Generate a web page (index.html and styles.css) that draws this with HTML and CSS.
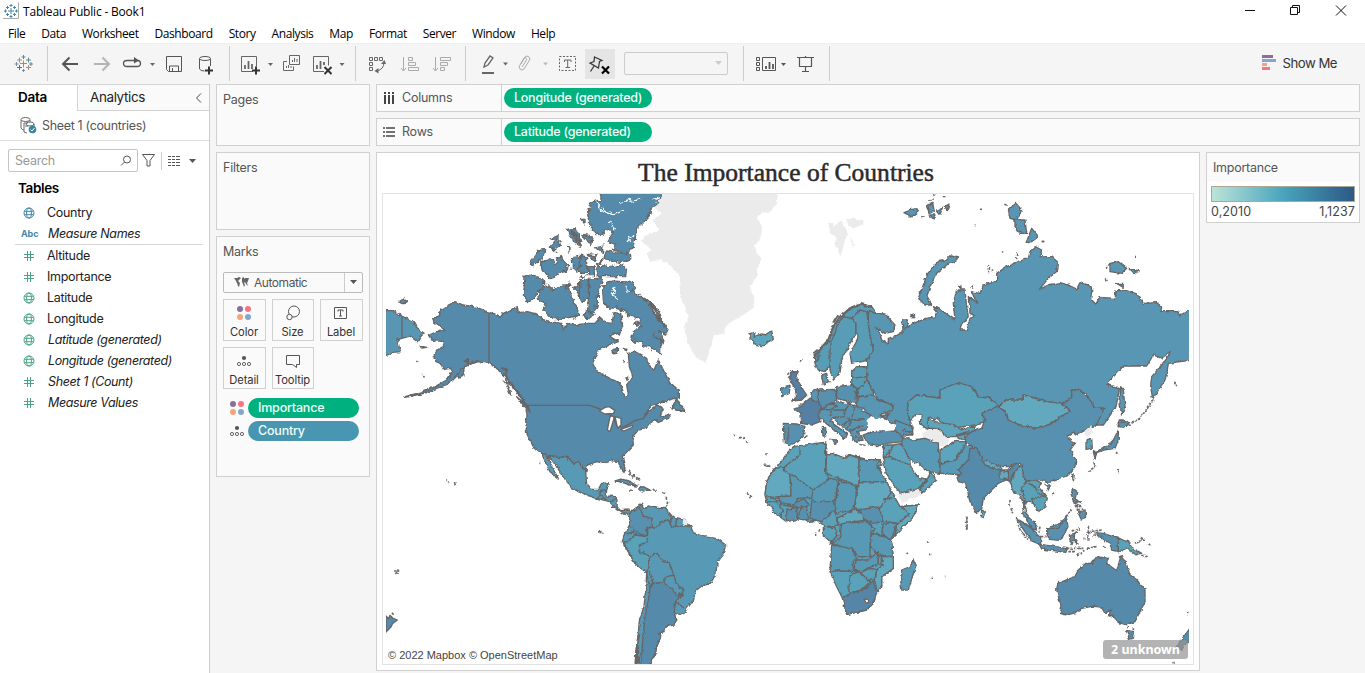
FILE: index.html
```html
<!DOCTYPE html>
<html lang="en">
<head>
<meta charset="utf-8">
<title>Tableau Public - Book1</title>
<link rel="stylesheet" href="styles.css">
</head>
<body>
<svg class="defs" width="0" height="0">
  <symbol id="globe" viewBox="0 0 12 12"><g fill="none" stroke="currentColor"><circle cx="6" cy="6" r="5"/><ellipse cx="6" cy="6" rx="2.4" ry="5"/><path d="M1.5 4.3h9M1.5 7.7h9"/></g></symbol>
  <symbol id="hash" viewBox="0 0 12 12"><path d="M4.5 1v10M7.5 1v10M1 4.5h10M1 7.5h10" stroke="currentColor" fill="none"/></symbol>
  <symbol id="dots" viewBox="0 0 16 16"><circle cx="4" cy="4" r="3" fill="#8a6f9d"/><circle cx="12" cy="4" r="3" fill="#fb7185"/><circle cx="4" cy="12" r="3" fill="#f3a47c"/><circle cx="12" cy="12" r="3" fill="#83a6cc"/></symbol>
  <symbol id="detail" viewBox="0 0 16 12"><circle cx="8" cy="3" r="2.1" fill="#555"/><g fill="none" stroke="#666"><circle cx="3" cy="9" r="1.6"/><circle cx="8" cy="9" r="1.6"/><circle cx="13" cy="9" r="1.6"/></g></symbol>
</svg>

<header class="titlebar">
  <svg class="app-icon" width="18" height="18" viewBox="0 0 18 18"><path d="M16.500.5v16H1" fill="none" stroke="#aaa"/><path d="M9 6v6M6 9h6M9 2v3M7.500 3.500h3M9 13v3M7.500 14.500h3M3.500 7.500v3M2 9h3M14.500 7.500v3M13 9h3M5.500 4v3M4 5.500h3M12.500 4v3M11 5.500h3M5.500 11v3M4 12.500h3M12.500 11v3M11 12.500h3" stroke="#4584a7" fill="none"/></svg>
  <span class="app-name">Tableau Public - Book1</span>
  <svg class="window-buttons" width="120" height="22" viewBox="1240 0 120 22" fill="none" stroke="#111"><path d="M1245 10.500h10M1290.500 7.500h7v7h-7zM1292.500 7v-1.500h7v7h-2M1336 5.500l10 10M1346 5.500l-10 10"/></svg>
</header>
<nav class="menu"><span>File</span><span>Data</span><span>Worksheet</span><span>Dashboard</span><span>Story</span><span>Analysis</span><span>Map</span><span>Format</span><span>Server</span><span>Window</span><span>Help</span></nav>

<div class="toolbar">
  <svg class="tool-group" width="47" height="35" viewBox="0 46 47 35" fill="none"><path d="M23.500 60.500v7M20 63.500h7" stroke="#e8762d"/><path d="M19.500 57.500v5M17 60h5M28.500 65v5M26 67.500h5" stroke="#b98b64"/><path d="M28.500 57.500v5M26 60h5M23.500 55v4M21.500 57h4M31 62v4M29 64h4" stroke="#5b879b"/><path d="M19.500 65v5M17 67.500h5" stroke="#c74055"/><path d="M16.500 62v4M14.500 64h4M23.500 69v3M22 70.500h3" stroke="#7b8eb2"/></svg>
  <svg class="tool-group" width="182" height="35" viewBox="47 46 182 35" fill="none" stroke="#555"><path d="M78 64H63M69.500 57.500L63 64l6.500 6.500" stroke-width="2"/><path d="M94 64h15M102.500 57.500l6.500 6.500-6.500 6.500" stroke="#b4b4b4" stroke-width="2"/><path d="M135 60.500h-8q-3.500 0-3.500 3t3.500 3h10q3.500 0 3.500-3t-3-3" stroke-width="1.300"/><path d="M134 57l5 3.500-5 3z" fill="#555" stroke="none"/><path d="M150 63h5l-2.500 3z" fill="#666" stroke="none"/><path d="M166.500 56.500h15v15h-13l-2-2zM169.500 71v-5h9v5M172.500 71v-3"/><ellipse cx="205" cy="58.500" rx="5.500" ry="2"/><path d="M199.500 59v10q1 2 5 2M210.500 59v7"/><path d="M205 70.500h8M209 66.500v8" stroke="#333" stroke-width="2"/></svg>
  <svg class="tool-group" width="126" height="35" viewBox="229 46 126 35" fill="none" stroke="#666"><path d="M253 71.500h-11.500v-15h15v10"/><path d="M245 69v-4M248.500 69v-8M252 69v-5" stroke-width="1.800"/><path d="M252 70.500h8M256 66.500v8" stroke="#333" stroke-width="2"/><path d="M268 63h5l-2.500 3zM339.500 63h5l-2.500 3z" fill="#666" stroke="none"/><path d="M289.500 55.500h10v9h-10zM287 61.500h-3.500v9h10v-4M292.500 62v-2M294.500 62v-4M297 62v-3M286.500 68v-2M288.500 68v-3M291 68v-2"/><path d="M324 71.500h-10.500v-15h15v9"/><path d="M317 69v-4M320.500 69v-8M324 65v-3" stroke-width="1.800"/><path d="M324.500 67l7 7M331.500 67l-7 7" stroke="#333" stroke-width="2"/></svg>
  <svg class="tool-group" width="110" height="35" viewBox="355 46 110 35" fill="none" stroke="#666"><path d="M369.500 57.500h3v3h-3zM374.500 57.500h3v3h-3zM379.500 57.500h3v3h-3zM369.500 62.500h3v3h-3zM369.500 67.500h3v3h-3zM376 71q8-1 8-9"/><path d="M374.500 71l4-3v5.500zM381 64l5 0-1.500-4z" fill="#666" stroke="none"/><g stroke="#aaa"><path d="M403.500 57v14M401 68l2.500 3 2.500-3M408.500 57.500h4v3h-4zM408.500 62.500h7v3h-7zM408.500 67.500h10v3h-10zM435.500 57v14M433 68l2.500 3 2.500-3M440.500 57.500h10v3h-10zM440.500 62.500h7v3h-7zM440.500 67.500h4v3h-4z"/></g></svg>
  <svg class="tool-group last" width="119" height="35" viewBox="465 46 119 35" fill="none" stroke="#666"><path d="M484 67l1-4 5-7 3 2-5 7zM484 67l4-2" stroke-width="1.300"/><path d="M482 73h12" stroke-width="2"/><path d="M503 62.500h5l-2.500 3z" fill="#666" stroke="none"/><path d="M543 62.500h5l-2.500 3z" fill="#bbb" stroke="none"/><path d="M521 64l4-7q2-2 4 0t0 4l-5 8q-2 2-4 0t0-4l4-7q1-1 2 0t0 3l-4 6" stroke="#aaa"/><path d="M559.500 56.500h16v14h-16z" stroke-dasharray="2 1.500"/><path d="M564.500 62v-2h6.500v2M567.700 60v8M565.500 67.500h4.500"/></svg>
  <span class="pin-button"><svg width="30" height="30" viewBox="585 49 30 30" fill="none" stroke="#333"><path d="M594.500 57l7.500 3.500-2.500 1-1 6.500-8.500-5 4-1.500zM594 66l-3.500 5.500" stroke-width="1.200"/><path d="M602 66.500l7 7M609 66.500l-7 7" stroke="#000" stroke-width="2.200"/></svg></span>
  <span class="combo"><svg width="8" height="5" viewBox="0 0 8 5"><path d="M0 0h7L3.500 4z" fill="#ccc"/></svg></span>
  <svg class="tool-group view-group" width="86" height="35" viewBox="743 46 86 35" fill="none" stroke="#555"><path d="M743.500 46v35" stroke="#ccc"/><path d="M756.500 57.500h3v3h-3zM756.500 62.500h3v3h-3zM756.500 67.500h3v3h-3zM762.500 57.500h13v13h-13z"/><path d="M766 69v-3M769.500 69v-7M773 69v-5" stroke-width="1.800"/><path d="M781 63h5l-2.500 3z" fill="#555" stroke="none"/><path d="M797 57.500h17M799.500 58v8.500h12V58M805.500 56v2M805.500 67v5M802 71.500h7" stroke-width="1.200"/></svg>
  <span class="show-me"><svg width="15" height="16" viewBox="0 0 15 16"><path fill="#8a6f9d" d="M0 0h11v3H0z"/><path fill="#83a6cc" d="M0 4h14v3H0z"/><path fill="#f3a47c" d="M0 8h5v3H0z"/><path fill="#fb7185" d="M0 12h8v3H0z"/></svg>Show Me</span>
</div>

<main class="workspace">
  <aside class="data-pane">
    <div class="tabs"><span class="tab-active">Data</span><span class="tab">Analytics<svg width="8" height="10" viewBox="0 0 8 10"><path d="M6 .5L1.500 5 6 9.500" fill="none" stroke="#444"/></svg></span></div>
    <div class="source"><svg width="18" height="18" viewBox="0 0 18 18" fill="none" stroke="#666"><ellipse cx="5.500" cy="2.500" rx="4.500" ry="2"/><path d="M1 3v8q1 2 3 2M4 6h4M5 9h3M4 6v9l3 1M10 5q-4 0-4 2t4 2 4-2-4-2v-2M14 7v3"/><circle cx="12.500" cy="12.500" r="3.800" fill="#3686a0" stroke="none"/><path d="M10.500 12.500l1.500 1.500 2.500-3" stroke="#fff"/></svg><span>Sheet 1 (countries)</span></div>
    <div class="search-row"><span class="search"><span>Search</span><svg width="12" height="12" viewBox="0 0 12 12" fill="none" stroke="#555"><circle cx="7" cy="4.500" r="3.500"/><path d="M4.500 7L1 10.500"/></svg></span>
      <svg width="58" height="18" viewBox="140 151 58 18" fill="none" stroke="#555"><path d="M142.500 153.500h12l-4.500 6v5.500h-3v-5.500z"/><path d="M161.500 151v18" stroke="#ccc"/><path d="M168 155.500h3m1 0h3m1 0h4M168 158.500h3m1 0h3m1 0h4M168 161.500h3m1 0h3m1 0h4M168 164.500h3m1 0h3m1 0h4"/><path d="M189 158h7l-3.500 4z" fill="#555" stroke="none"/></svg></div>
    <h2 class="tables">Tables</h2>
    <ul class="fields dims">
      <li class="blue"><svg><use href="#globe"/></svg><span>Country</span></li>
      <li class="blue"><b>Abc</b><i>Measure Names</i></li>
    </ul>
    <ul class="fields">
      <li><svg><use href="#hash"/></svg><span>Altitude</span></li>
      <li><svg><use href="#hash"/></svg><span>Importance</span></li>
      <li><svg><use href="#globe"/></svg><span>Latitude</span></li>
      <li><svg><use href="#globe"/></svg><span>Longitude</span></li>
      <li><svg><use href="#globe"/></svg><i>Latitude (generated)</i></li>
      <li><svg><use href="#globe"/></svg><i>Longitude (generated)</i></li>
      <li><svg><use href="#hash"/></svg><i>Sheet 1 (Count)</i></li>
      <li><svg><use href="#hash"/></svg><i>Measure Values</i></li>
    </ul>
  </aside>

  <section class="cards">
    <div class="card pages">Pages</div>
    <div class="card filters">Filters</div>
    <div class="card marks">Marks
      <div class="mark-type"><svg width="15" height="11" viewBox="0 0 15 11"><path d="M0 1l3 0 2-1 2 1-2 2-1 1 2 2-1 4-1-1-1-3-1-2zM8 1l2-1v2l1-1 4 0-1 3-1 2 1 3-2-2-1-2-1 1 1 2-1 2-1-3-1-2z" fill="#666"/></svg><span>Automatic</span><em><svg width="7" height="5" viewBox="0 0 7 5"><path d="M0 0h7L3.500 4z" fill="#555"/></svg></em></div>
      <div class="mark-buttons">
        <span><svg width="16" height="16"><use href="#dots"/></svg>Color</span>
        <span><svg width="16" height="16" viewBox="0 0 16 16" fill="none" stroke="#555"><circle cx="9" cy="6.500" r="5.500"/><circle cx="4.500" cy="12" r="2.700" fill="#fafafa"/></svg>Size</span>
        <span><svg width="16" height="16" viewBox="0 0 16 16" fill="none" stroke="#555"><path d="M1.500 2.500h12v11h-12zM5 6.500v-1.500h5v1.500M7.500 5v6M6 11h3"/></svg>Label</span>
        <span><svg width="16" height="16" viewBox="0 -2 16 16"><use href="#detail" width="16" height="12"/></svg>Detail</span>
        <span><svg width="16" height="16" viewBox="0 0 16 16" fill="none" stroke="#555"><path d="M1.500 2.500h13v9h-3v3l-4-3h-6z"/></svg>Tooltip</span>
      </div>
      <div class="mark-row"><svg width="16" height="16"><use href="#dots"/></svg><span class="pill">Importance</span></div>
      <div class="mark-row"><svg width="16" height="12"><use href="#detail"/></svg><span class="pill pill-blue">Country</span></div>
    </div>
  </section>

  <section class="canvas">
    <div class="shelf"><span class="shelf-name"><svg width="12" height="12" viewBox="0 0 12 12"><path d="M2 0v2M2 3v9M6 0v2M6 3v9M10 0v2M10 3v9" stroke="#444" stroke-width="2"/></svg>Columns</span><span class="pill">Longitude (generated)</span></div>
    <div class="shelf"><span class="shelf-name"><svg width="12" height="12" viewBox="0 0 12 12"><path d="M0 2h2M3 2h9M0 6h2M3 6h9M0 10h2M3 10h9" stroke="#444" stroke-width="1.500"/></svg>Rows</span><span class="pill">Latitude (generated)</span></div>
    <div class="view-row">
      <div class="view">
        <h1>The Importance of Countries</h1>
        <div class="map">
<svg class="world" width="803" height="470" viewBox="18 12 2409 1410">
<defs><filter id="coast" filterUnits="userSpaceOnUse" x="-1200" y="-800" width="3800" height="2400" color-interpolation-filters="sRGB"><feTurbulence type="fractalNoise" baseFrequency=".07" numOctaves="3" seed="7"/><feDisplacementMap in="SourceGraphic" scale="11" xChannelSelector="R" yChannelSelector="G"/></filter>
<filter id="fjord" filterUnits="userSpaceOnUse" x="0" y="0" width="2450" height="1440" color-interpolation-filters="sRGB"><feTurbulence type="fractalNoise" baseFrequency=".06" numOctaves="3" seed="3"/><feDisplacementMap in="SourceGraphic" scale="22" xChannelSelector="R" yChannelSelector="G"/></filter></defs>
<g class="nodata" filter="url(#coast)">
<path d="M845 5H1190L1192 40 1170 65 1145 70 1130 85 1148 110 1140 150 1125 165 1130 190 1145 205 1130 240 1135 260 1110 290 1120 320 1125 350 1090 375 1045 400 1030 430 1000 440 990 480 978 518 950 505 925 460 912 410 925 380 910 335 900 320 900 260 870 225 840 210 810 215 800 190 815 180 785 155 790 140 835 120 820 90 845 70 820 50z"/>
<path d="M1345 98l15 2v10l22-18 13 18 10 20-10 20-13 50-7-15-10-25 5-20-20-10zM1395 90l25-5 30 5v15l-30 10-15-10zM1410 140l15 25-5 10z"/>
</g>
<g filter="url(#coast)">
<g class="c-us">
<path d="M327 367L290 352 250 345 225 335 200 348 180 362 178 378 158 385 162 395 180 408 195 422 170 425 148 435 160 452 193 455 190 470 170 480 160 500 168 515 182 520 190 538 212 535 218 545 200 570 165 590 130 605 75 620 78 622 135 609 205 582 230 555 255 530 290 515 327 520 345 530 375 560 400 590 420 620 440 645 437 690 440 730 460 770 485 790 530 802 560 802 582 820 595 815 617 845 622 825 650 815 672 820 695 812 715 815 722 835 732 848 735 835 727 800 760 765 758 740 775 720 800 715 806 702 825 690 835 697 865 685 872 675 840 678 850 655 835 645 805 665 795 675 812 650 850 635 898 622 898 600 870 580 855 550 835 510 822 540 808 530 800 505 765 485 745 490 748 530 758 560 740 585 745 615 735 620 720 580 680 560 650 545 638 520 655 480 690 465 715 455 690 440 705 425 718 435 728 405 722 370 702 368 696 400 678 398 660 382 645 400 625 400 585 405 560 400 552 420 545 400 500 395 470 372 440 365 415 368 412 350 370 370 360 382 345 372z"/>
<path d="M890 625l10 20 18 20-28-5-15-5zM235 545l18-15-5 30-15 5zM380 590l10 15 2 10zM410 620l35 30 5 15-20-20zM695 480l18-5-2 12-12 2zM733 475l8 3-4 6zM730 510l6 8M738 560l8 3-5 8z"/>
</g>
<path class="c-ru" d="M10 362L40 362 65 378 100 395 110 412 132 430 120 442 112 455 90 438 65 445 50 450 62 485 40 487 10 500zM58 335l12-8 12 8-12 6zM120 468l20 4-15 2z"/>
</g>
<g class="c-us" filter="url(#fjord)">
<path d="M435 262L455 258 480 265 497 285 470 310 465 325 447 335 430 318zM476 300L500 288 520 300 545 285 568 285 575 330 595 350 592 378 560 384 520 386 485 358 500 345 478 330zM450 215L475 182 497 178 492 200 460 224zM482 215L510 203 530 220 540 193 554 215 564 235 540 250 515 264 487 242zM510 170L525 153 542 165 522 182zM513 147l24-10v16zM563 118L582 113 607 150 602 167 578 152zM577 203L612 198 617 237 600 247 577 237zM583 295L610 268 627 288 622 328 598 322zM560 170l10 5v15zM600 88l12 0v14zM555 285l12-6 6 12-12 4z"/>
<path d="M660 5L850 5 835 30 805 80 775 110 760 165 740 190 700 180 710 165 685 155 700 125 675 120 660 140 630 110 625 60 640 35 665 30zM672 205L678 183 710 188 752 193 752 206 720 217zM650 225L685 230 720 223 740 235 737 260 655 260zM598 200L620 203V247L598 247zM620 193l28 5-5 16zM623 230h20v27h-20zM610 133l27 5-5 29zM596 128l8 20-5 12zM650 173l22-5-2 22zM600 268L624 273 627 322 610 334 598 324zM628 268L667 263 662 290 652 310V345L642 368 623 362 626 320zM606 375l17-12 20 12-20 12zM765 400l12-7-4 15z"/>
<path d="M668 290L685 276 700 273 757 278 764 300 752 305 782 318 817 343 822 368 862 413 857 432 837 425 852 450 842 455 842 492 815 477 780 457 753 450 758 430 783 410 773 387 745 373 733 362 710 354 685 354 670 332z"/>
<path class="inlet" d="M648 35L670 65 700 75 735 60M685 95l20 25M720 40l40-12M820 30l25-8M780 20l-20 15M740 160l20-25M702 290l-5 25 15 10M740 290l5 15"/>
<path class="border heavy" d="M785 320l30 25 8 25 32 40M820 430l30 30M672 205l-20 20M600 255l20 5M575 120l20 35"/>
</g>
<path class="border" d="M327 367V520M66 378v67M440 646H630L660 657 700 680 710 708 730 712 765 692 790 685 805 665"/>
<path class="lake" d="M658 663L675 652 688 650 705 662 700 670 675 672zM690 680q10-5 12 5l-12 40-8-5zM705 680l18 5 0 20-10 10zM722 718l35-12 2 5-28 12z"/>
<g transform="translate(360 690)" filter="url(#coast)">
<path class="c-mx" d="M125 100L170 112 200 112 222 130 235 125 257 155 260 190 275 208 295 208 305 190 328 188 320 210 300 215 300 225 290 235 260 225 215 205 205 190 180 155 150 112 142 110 155 140 175 175 150 155 135 125zM300 215L320 210 318 228 350 230 352 262 362 272 390 270 392 285 370 282 345 262 328 245 292 235 300 225z"/>
<path class="border" d="M300 225l20 15M350 235l-20 10M348 262h-12"/>
<path class="c-mx" d="M345 183L365 177 390 185 412 198 390 195 360 185zM415 205l15-5 20 10-20 3zM387 210l12 1M460 210l10 1M385 150l8 10M398 165l20 15"/>
<path class="c-br" d="M388 285L400 270 425 252 432 265 445 258 470 265 500 265 505 280 525 292 555 298 572 320 580 338 610 350 650 355 677 375 670 400 652 425 648 460 632 490 605 498 587 512 580 540 555 575 540 583 522 580 530 600 520 615 495 620 490 635 475 640 482 650 470 680 465 700 445 740 405 740 408 690 415 640 418 600 432 560 438 500 440 458 405 430 385 395 367 365 372 345 388 320 392 300z"/>
<path class="c-co" d="M388 285L400 270 425 252 420 265 430 288 455 295 458 322 440 325 443 350 415 340 388 320 392 300z"/>
<path class="c-pe" d="M372 365L380 365 405 345 443 350 440 365 418 375 420 395 448 408 448 440 440 458 405 430 385 395z"/>
<path class="c-us" d="M460 490L490 488 520 510 530 525 548 520 527 545 522 580 530 600 520 615 495 620 490 635 475 640 482 650 470 680 465 700 445 740 420 740 425 700 430 640 435 590 445 540 450 505z"/>
<path class="border" d="M458 322L480 318 480 305 505 300 515 320 545 318 560 318 572 320M505 280l10 15-5 20M530 295l-3 23M448 408L472 400 485 420 508 430 522 465 500 470 490 488 460 490 448 455M522 468L528 490 550 510 545 525 530 525M527 545L553 565M443 350v-25M372 345l28-10 5 10M440 458l10 47"/>
<path class="none" d="M550 293l16 12-8 13-10-4z"/>
<path class="border heavy" d="M418 640l-6 30-4 60M414 680v50"/>
<path class="tiny" d="M297 335l14 5M302 332v8M700 45l5 2M718 52l14 3M738 64l5 4M790 135l18 4M742 218l14 14M748 234l8-4M798 102h4M118 130h3M385 150l10 8M388 160l12 12M402 165l18 16M490 215l5 5M499 230v8M503 245l-3 15"/>
</g>
<g filter="url(#coast)">
<path class="c-li" d="M1110 430L1125 428 1122 440 1145 432 1155 435 1175 422 1180 445 1145 470 1125 465 1120 450 1110 445z"/>
</g>
<g transform="translate(1170 0)" filter="url(#coast)">
<path class="c-ru" d="M295 365L320 370 345 372 375 405 370 425 345 430 315 410 330 430 335 450 355 462 355 445 375 440 400 425 395 390 410 390 415 400 405 415 430 400 470 385 495 380 500 365 490 350 520 365 555 390 550 340 560 300 585 300 590 350 595 380 575 405 570 420 590 420 600 385 615 378 600 370 598 320 620 340 605 305 630 310 640 285 680 275 680 250 710 230 745 215 775 205 780 185 795 170 815 180 810 200 845 200 862 215 860 245 835 265 808 298 835 285 870 278 895 285 920 297 930 278 955 285 968 300 965 330 978 343 988 322 1035 325 1038 302 1070 302 1100 312 1120 340 1160 338 1175 350 1173 365 1220 365 1230 375 1270 355V510L1230 515 1195 520 1190 550 1185 570 1148 627 1142 590 1145 560 1175 525 1195 500 1200 485 1175 505 1150 495 1130 528 1060 528 1010 582 1038 592 1048 600 1038 650 1000 705 975 705 1002 655 975 655 950 615 930 600 905 600 905 625 875 640 830 635 760 615 760 630 710 630 685 648 630 625 605 590 565 578 510 600 510 625 475 620 440 615 415 635 412 665 420 690 430 725 400 715 350 690 340 680 370 655 368 645 325 630 310 600 290 575 290 530 290 512 310 480 300 440 295 400z"/>
<path class="c-ru" d="M545 195L562 200 560 212 530 225 500 250 480 290 470 320 485 345 465 345 445 325 460 285 475 245 505 215 530 210zM402 68l20-8 18-5 5 10-20 15zM455 80l8 2zM470 50l18-10 5 25-15 5zM480 75l15 0-5 12zM500 60l18-5-8 18zM525 50l12-8-5 20zM490 12h5zM520 20h5zM422 375l12-3-5 12zM568 290l8-3-3 10zM715 60L738 40 755 60 740 90 720 85zM735 90l30 0 5 40-20 0-15-20zM785 115L805 140 785 155 768 160zM1020 220L1045 215 1070 235 1055 250 1020 245zM1078 235l30 8-15 8zM1040 280l20 0 0 12zM1052 590L1060 600 1065 650 1055 675 1050 640zM1045 690L1060 690 1075 700 1045 710z"/>
<path class="tiny" d="M472 45l20-5M478 35l12-8M415 80l12 2M630 55h6M610 105l8 2M655 250v-25M665 240h5M695 186h5M740 190v15M703 43l8 3M815 153l5 3M1010 230v5M1008 268l4 6M1095 200h3M1210 578l14 8M1075 705l35-20 40-55M605 290l5 5"/>
<path class="c-no" d="M132 490L150 475 175 455 190 410 210 380 240 355 270 342 305 350 320 370 295 365 280 385 270 360 245 385 220 380 200 410 195 430 180 460 180 525 165 545 145 540 135 520zM195 430L200 410 220 380 245 385 258 400 258 432 240 460 225 490 215 510 210 550 190 570 180 540 180 460z"/>
<path class="c-no" d="M258 400L245 385 270 360 290 365 295 400 300 440 310 480 290 512 245 520 240 490 262 450 265 430 258 430zM245 545L260 530 290 530 290 572 262 600 245 580zM155 555L170 550 175 575 160 585zM262 600L290 572 310 600 310 615 262 620z"/>
<path class="border heavy" d="M135 500L155 472 175 450 190 410 210 382 240 355 275 343 305 350M190 398l15-25M205 388l15-20M137 520l10-25"/>
<path class="c-co" d="M145 600L195 598 200 630 180 640 190 655 155 660 145 640zM200 590L245 585 260 595 258 640 200 625z"/>
<path class="c-ru" d="M125 605L145 598 145 640 120 625zM262 620L310 615 325 630 368 645 365 660 330 675 345 690 320 695 300 675 280 655 258 650zM35 595L60 585 58 610 35 620z"/>
<path class="c-uk" d="M65 545L85 545 80 565 100 600 110 615 95 630 65 633 80 620 75 595 60 570z"/>
<path class="border" d="M262 620l-10-20M245 565l45-5M175 570l8 8"/>
<path class="tiny" d="M52 548l12 10M90 515l5-8M55 560l10 10M60 575l8 5"/>
<path class="c-kz" d="M415 635L440 615 475 620 510 625 510 600 565 578 605 590 630 625 655 620 685 648 650 670 640 700 600 708 560 712 520 700 500 685 475 685 475 720 450 700 455 675 435 675 420 690 412 665z"/>
</g>
<g transform="translate(1125 660)" filter="url(#coast)">
<path class="c-ru" d="M150 15L200 0 215-15 250-25 303-12 345 15 342 40 330 60 305 65 325 90 300 95 285 65 260 50 232 25 225 35 275 70 268 88 255 72 215 42 200 25 150 40z"/>
<path class="c-uk" d="M165-35L195-20 200-5 190 12 195 35 170 45 137 40 135 10 115-5 140-15z"/>
<path class="border" d="M195-5l30 5 25-15M225 18l10-18 35 0 20-25M235 25l30-5 10-25M265 45l20-15 45 0M275 20l15 15-15 20M290 30l40-5M285 60l40-12M300-10l-10 35M225-20l25 10"/>
<path class="c-co" d="M85 40L125 42 150 50 145 75 130 95 105 105 88 98zM202 50h10v28h-8zM225 88l20 2-3 13zM325 75L355 65 400 60 440 70 445 95 395 100 365 105 335 100z"/>
<path class="c-ru" d="M420 30L470 50 475 75 440 75 420 60zM310 103l22 3M362 110l12-1"/>
<path class="border" d="M101 50l-3 45M445 55l30 20M440 65l30 0"/>
<path class="lake" stroke="none" d="M335 30l15-12 12 10 22-8 22 22 18 5-5 13-28 4-30-6-25 4z"/>
<path class="c-ru" d="M382 18l20-6-12 16z"/>
<path class="none" d="M500 70L545 50 585 90 565 110 510 90zM600 80l30 0 10 15-35 0zM430 252L495 235 495 258 440 278z"/>
<path class="c-li" d="M520 25L545 35 570 40 600 45 620 60 640 50 660 50 660 65 600 80 575 80 550 55 520 55zM605 75l35-10 20 10-20 15-30-5z"/>
<path class="c-li" d="M555 120L600 95 635 95 620 120 600 150 555 160zM385 105L415 105 400 130 385 150zM415 105L440 100 465 150 465 165 400 140z"/>
<path class="c-br" d="M445 80L470 90 510 85 550 100 555 190 520 185 490 160 465 150 440 100zM555 190L555 160 600 150 630 110 650 100 655 120 660 135 635 165 620 195 560 190z"/>
<path class="c-kz" d="M385 145L400 140 465 165 490 205 515 210 490 235 435 250 390 185zM515 215L525 185 545 210 500 250 495 235z"/>
<path class="c-kz" d="M115 110L205 97 215 115 215 130 245 135 270 145 285 135 335 148 375 150 382 165 370 168 395 220 410 245 435 290 490 285 475 320 420 375 405 395 415 440 415 475 380 500 380 530 365 545 355 580 335 600 275 613 265 570 245 530 225 485 235 430 235 405 205 375 205 345 185 330 160 335 140 320 95 335 60 310 35 275 30 255 35 215 60 175 85 145 100 125z"/>
<path class="c-lt" d="M35 215L62 175 88 172 88 185 105 195 108 258 45 262 30 255zM215 130L245 135 270 145 285 135 312 145 312 228 212 190zM312 215L395 215 410 245 390 275 370 300 315 300 295 290 302 260zM245 325L305 295 335 330 300 335 250 345zM435 290L490 285 475 320 420 375 425 345 465 310zM375 440L415 440 415 475 380 500 380 530 365 545 360 510 365 480 385 465z"/>
<path class="c-br" d="M312 148L375 150 365 165 395 215 312 215zM105 190L175 240 170 262 130 265 115 290 80 285 70 260 108 258zM175 240L225 205 250 210 250 250 235 275 170 275 170 262zM250 210L305 230 302 270 295 300 240 310 240 280zM260 340L340 335 350 350 345 400 345 440 310 440 290 415 260 410 230 400 255 385zM385 340L425 340 415 375 405 390 380 370zM350 370L380 375 410 395 415 440 370 435 345 410zM230 405L260 410 290 415 305 445 295 485 225 482zM295 450L340 450 370 425 370 460 320 485 295 480z"/>
<path class="c-co" d="M170 275L235 275 240 300 200 335 165 325zM315 300L370 290 385 335 350 340 325 325zM95 298l30-5 3 35-33 7zM112 285l35-20 15 20-25 12zM135 290l20 0 5 38-30 2z"/>
<path class="border" d="M135 110V135L95 165 88 172M212 97V190L225 205M240 300L250 345 215 350M225 482L315 485 285 495 280 565M285 550L320 540 345 515 315 487M320 485L350 475 365 480 360 510 335 510M385 270L410 262M390 335L430 340M205 350l35 3 5 25-20 22M45 262l50 20 20 10M35 275l30 0 20 25-10 20M340 340l20 15-10 20M370 425v35l15 10M375 430l8 40"/>
<path class="c-sa" d="M262 565L285 550 320 540 355 515 365 545 355 580 335 600 275 613z"/>
<circle class="lake" cx="335" cy="573" r="6"/>
<path class="c-br" d="M475 447L483 465 460 540 440 540 437 510 440 480 465 470z"/>
<path class="tiny" d="M28 165l20 5M30 132l5 1M192 365l2-10M180 373h4M513 392l8 6M530 503h4M568 500h3M455 428l3 4M522 433h4M636 320v40M35 277l12 15M300 80l15 8M310 65l8 20M325 75v15M150 80l8-3"/>
</g>
<g transform="translate(1740 690)" filter="url(#coast)">
<path class="c-co" d="M115-42L140-20 145 0 180 15 235 25 275 10 300-10 330-25 305-50 335-65 335-90 360-90 380-75 405-35 432-35 410 15 395 20 345 45 345 35 320 50 345 70 330 90 348 120 345 140 325 165 290 180 265 188 245 180 225 178 200 185 190 165 185 135 165 130 150 140 125 140 70 125 55 105 50 85 20 70 15 50 35 35 65 25 75 0 65-20z"/>
<path class="c-lt" d="M115-42L140-60 190-60 190-75 260-55 305-50 330-25 300-10 275 10 235 25 180 15 145 0 140-20z"/>
<path class="c-us" d="M30 85L50 85 60 105 70 125 125 150 145 150 170 130 180 145 160 160 150 185 140 180 115 190 70 235 65 265 50 280 30 245 15 185 0 190-10 175 5 160-5 150 25 120z"/>
<path class="c-lt" d="M70 125L80 120 125 145 120 150 75 135zM120 150L145 155V180L120 175zM150 185L165 155 185 135 190 165 200 190 185 205 190 240 200 275 180 225 160 215z"/>
<path class="c-kz" d="M200 185L225 178 245 190 235 200 262 235 255 260 235 275 220 250 200 245 190 270 215 300 225 325 205 305 188 280 195 235 183 205zM65 268L77 280 72 293 64 290z"/>
<path class="border" d="M205 190l20 10 10 20 20 10M220 250l-5-15 30-5"/>
<path class="c-co" d="M205 290l20 15 5 25-15-5-15-25zM168 295L200 313 242 350 242 374 213 362 188 325zM238 373L290 380 322 387 317 397 245 387zM260 325L300 310 318 288 324 320 302 362 268 358 260 340zM338 205L350 213 345 235 362 250 340 242 333 225zM353 275L375 272 377 292 363 297zM328 345L350 338 340 350 354 372 340 362 336 374 330 360zM405 338L430 340 475 355 475 395 455 390 450 370 430 360zM475 10L500 5 510 10 490 22 475 20zM475 30L475 60 465 85 430 90 405 100 425 85 455 70zM400 95L410 100 405 115zM337 165L343 162 340 185zM258 195L272 195 265 210z"/>
<path class="c-kz" d="M475 355L505 365 520 385 545 400 525 405 500 385 475 395zM378 60L395 55 397 85 378 88z"/>
<path class="none" d="M370 35L395 15 395 40 380 55z"/>
<path class="c-us" d="M410 410L445 415 440 430 470 452 483 407 500 435 510 465 530 480 555 510 555 545 535 585 525 605 500 615 470 605 460 585 445 590 455 568 435 580 425 562 400 558 365 565 350 577 320 585 300 580 305 565 290 510 293 490 345 470 355 450 378 430 395 430zM500 632L523 635 520 655 508 658zM692 622V660L665 688 645 685 660 665z"/>
<path class="tiny" d="M335 333l25-6M345 255l15 25M350 250l20 20M345 245l15 30M318 290l18-22M385 320v20M388 335l-5 15M325 395h20M350 405l25-15M380 385l30-5M320 385l50 0M370 355l20 2M400 345l35 5M425 330l-35 5M430 375l5 10M525 370l25-15M540 352l15 8M565 370l8 8M545 405l15 5M172 315l15 25M180 330l25 30M150 240v20M153 265l5 15M385 155l20-15M402 125l3 15M475 150l5 10M280 220v6M240 320l-3 15M245 350h15M20 290v40M683 578v5M640 728h4M470 95v8M500 622h4M520 622v8"/>
<path class="border" d="M262 325l30 0 25-25"/>
</g>
<g filter="url(#fjord)"><path class="border heavy" d="M360 530L380 560 400 590 420 620 445 655M250 510l15 10 30-5M820 345l35 65M372 535l10 25-8 10 15 20M265 505l-5 18"/>
<path class="tiny" d="M195 870l14 2M222 880l9 7M110 510l5 5M130 555l4 10"/></g>
<path class="c-us" d="M18 1278l8 8 4-10 8 8 14 6-14 10-6 12-14 14z"/><path class="tiny" d="M42 1143l16 0M54 1138l0 14M46 1152l10-12M36 1268l6 8"/>
</svg>
          <span class="attribution">© 2022 Mapbox © OpenStreetMap</span>
          <span class="unknown">2 unknown</span>
        </div>
      </div>
      <div class="legend"><div class="legend-title">Importance</div><div class="ramp"></div><div class="range"><span>0,2010</span><span>1,1237</span></div></div>
    </div>
  </section>
</main>
</body>
</html>
```
FILE: styles.css
```css
* { box-sizing: border-box; }
body { margin: 0; width: 1365px; height: 673px; overflow: hidden; display: flex; flex-direction: column; background: #f5f5f5; color: #333; font: 12.5px/16px Inter, "Open Sans", sans-serif; letter-spacing: -.25px; }
.defs { position: absolute; }
svg { flex: none; display: block; }
.titlebar { height: 22px; flex: none; background: #fff; display: flex; align-items: center; padding: 0 5px 0 2px; font: 12px/18px "Open Sans", sans-serif; color: #000; letter-spacing: -.2px; }
.app-name { margin-left: 3px; flex: 1; padding-top: 2px; }
.menu { height: 21px; flex: none; background: #fff; display: flex; gap: 16px; padding: 3px 8px 0; font: 12px/18px "Open Sans", sans-serif; color: #000; letter-spacing: -.42px; }
.toolbar { height: 41px; flex: none; display: flex; align-items: center; border-top: 1px solid #eee; padding-bottom: 1px; }
.tool-group { box-shadow: 1px 0 0 #ccc; }
.tool-group.last { box-shadow: none; }
.pin-button { background: #e5e5e5; margin: 1px 0 0 1px; }
.combo { width: 104px; height: 23px; margin: 0 15px 0 9px; border: 1px solid #ccc; border-radius: 2px; display: flex; align-items: center; justify-content: flex-end; padding-right: 4px; }
.show-me { margin: 0 28px 1px auto; display: flex; align-items: center; gap: 5px; font-size: 13.2px; letter-spacing: -.5px; }
.workspace { flex: 1; display: flex; min-height: 0; }
.data-pane { width: 210px; background: #fff; border-right: 1px solid #ccc; color: #222; }
.tabs { display: flex; height: 27px; font-size: 13.5px; line-height: 25px; border-top: 1px solid #d4d4d4; }
.tab-active { width: 77px; padding-left: 18px; font-weight: 600; color: #000; letter-spacing: -.3px; }
.tab { flex: 1; display: flex; align-items: center; justify-content: space-between; padding: 0 6px 0 12px; border: solid #d4d4d4; border-width: 0 0 1px 1px; background: #fafafa; letter-spacing: -.4px; }
.source { height: 30px; display: flex; align-items: center; gap: 4px; padding: 0 20px; border-bottom: 1px solid #ddd; color: #555; letter-spacing: -.33px; }
.search-row { display: flex; align-items: center; gap: 2px; padding: 8px 0 0 8px; }
.search { width: 130px; height: 23px; border: 1px solid #c4c4c4; border-radius: 2px; display: flex; align-items: center; justify-content: space-between; padding: 0 5px 0 6px; color: #999; }
.tables { margin: 7px 0 4px 18px; font-size: 13.5px; line-height: 18px; font-weight: 600; color: #000; letter-spacing: -.35px; }
.fields { list-style: none; margin: 0; padding: 0 0 0 23px; color: #4aa587; }
.fields.dims { margin: 0 6px 0 15px; padding: 1px 0 0 8px; border-bottom: 1px solid #d8d8d8; }
.fields li { height: 21px; display: flex; align-items: center; }
.fields svg { width: 12px; height: 12px; margin-right: 12px; }
.fields li.blue { color: #4387a7; }
.fields b { font-size: 9px; width: 17px; margin: 0 9px 0 -2px; letter-spacing: -.1px; }
.fields span, .fields i { color: #222; letter-spacing: -.3px; }
.fields i { letter-spacing: -.38px; padding-left: 1px; }
.cards { width: 154px; margin-left: 6px; display: flex; flex-direction: column; gap: 6px; }
.card { border: 1px solid #d0d0d0; background: #fafafa; padding: 7px 6px; color: #555; }
.pages { height: 62px; }
.filters { height: 78px; }
.marks { height: 241px; }
.mark-type { height: 21px; margin-top: 12px; display: flex; align-items: center; gap: 5px; border: 1px solid #bbb; border-radius: 2px; padding-left: 10px; }
.mark-type span { flex: 1; font-size: 12px; letter-spacing: -.45px; }
.mark-type em { width: 18px; height: 19px; border-left: 1px solid #ccc; display: grid; place-items: center; }
.mark-buttons { display: grid; grid-template-columns: 43px 42px 43px; gap: 6px; margin: 6px 0; }
.mark-buttons span { height: 42px; border: 1px solid #d0d0d0; display: flex; flex-direction: column; align-items: center; gap: 3px; padding: 5px 1px 0 0; font-size: 11.2px; line-height: 16px; color: #333; letter-spacing: -.1px; }
.mark-row { display: flex; align-items: center; gap: 3px; height: 23px; padding: 0 4px 0 6px; }
.mark-buttons + .mark-row { margin-top: 7px; }
.pill { height: 20px; border-radius: 10px; background: #00b180; color: #f0fff8; font-weight: 500; padding: 0 10px; line-height: 20px; letter-spacing: -.2px; }
.mark-row .pill { flex: 1; }
.pill-blue { background: #4996b2; }
.canvas { width: 984px; margin-left: 6px; display: flex; flex-direction: column; gap: 6px; }
.shelf { height: 28px; flex: none; border: 1px solid #d0d0d0; background: #fafafa; display: flex; align-items: center; }
.shelf-name { width: 125px; height: 26px; margin-right: 2px; border-right: 1px solid #d0d0d0; display: flex; align-items: center; gap: 7px; padding-left: 6px; color: #555; }
.shelf .pill { width: 148px; white-space: nowrap; letter-spacing: -.25px; }
.view-row { display: flex; gap: 6px; align-items: flex-start; }
.view { width: 824px; height: 519px; border: 1px solid #d0d0d0; background: #fff; padding: 0 5px; }
h1 { margin: 0; height: 40px; padding-right: 4px; text-align: center; font: 25.5px/40px "Liberation Serif", serif; color: #2b2b2b; letter-spacing: .02px; -webkit-text-stroke: .5px #2b2b2b; }
.map { width: 812px; height: 472px; border: 1px solid #e2e2e2; position: relative; padding-left: 3px; }
.attribution { position: absolute; left: 1px; bottom: 1px; padding: 0 4px; background: rgba(255,255,255,.75); font: 11px/16px "Liberation Sans", Arial, sans-serif; color: #444; letter-spacing: 0; }
.unknown { position: absolute; right: 5px; bottom: 5px; width: 85px; height: 19px; border-radius: 3px; background: rgba(150,150,150,.72); color: #fff; font: bold 12.5px/19px "Noto Sans", sans-serif; text-align: center; letter-spacing: 0; }
.legend { width: 154px; height: 71px; border: 1px solid #d0d0d0; background: #fff; color: #555; }
.legend-title { height: 29px; padding: 7px 6px; background: #fafafa; }
.ramp { height: 16px; margin: 4px 4px 2px; border: 1px solid #aaa795; background: linear-gradient(90deg, #bce4d8, #49a4bd 50%, #2c5985); }
.range { display: flex; justify-content: space-between; padding: 0 4px; color: #444; letter-spacing: .1px; }
.world { overflow: hidden; stroke: #666; stroke-width: 4; stroke-linejoin: round; }
.world .nodata, .none { fill: #ebebeb; stroke: none; }
.c-us { fill: #568aaa; }
.c-ru { fill: #5896b3; }
.c-mx, .c-br { fill: #5899b5; }
.c-co { fill: #5891b0; }
.c-pe, .c-kz { fill: #5aa1ba; }
.c-li { fill: #5da5bd; }
.c-lt { fill: #62a9bf; }
.c-no { fill: #599cb6; }
.c-uk { fill: #557fa3; }
.c-sa { fill: #5585a7; }
.border { fill: none; }
.border.heavy { stroke-width: 7; }
.inlet { fill: none; stroke: #fff; stroke-width: 4; }
.lake { fill: #fff; }
.tiny { fill: none; stroke: #6c6c6c; stroke-width: 5; stroke-dasharray: 8 3; }
```
